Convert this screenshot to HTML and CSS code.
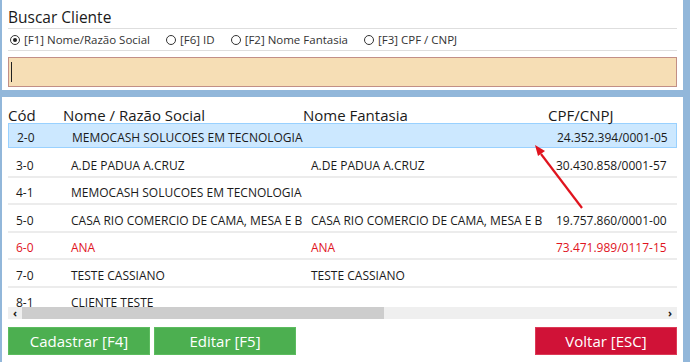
FILE: index.html
```html
<!DOCTYPE html>
<html>
<head>
    <title>Buscar Cliente</title>
    <meta charset="utf-8">
    <link rel="stylesheet" href="styles.css">
</head>
<body>
    <div class="window">
        <div class="search-panel">
            <div class="title">Buscar Cliente</div>
            <div class="options">
                <label class="option"><span class="radio checked"></span>[F1] Nome/Razão Social</label>
                <label class="option"><span class="radio"></span>[F6] ID</label>
                <label class="option"><span class="radio"></span>[F2] Nome Fantasia</label>
                <label class="option"><span class="radio"></span>[F3] CPF / CNPJ</label>
            </div>
            <div class="search-input"><span class="caret"></span></div>
        </div>

        <div class="results-panel">
            <div class="grid">
                <div class="row head">
                    <div class="cell">Cód</div>
                    <div class="cell">Nome / Razão Social</div>
                    <div class="cell">Nome Fantasia</div>
                    <div class="cell">CPF/CNPJ</div>
                </div>
                <div class="row selected">
                    <div class="cell">2-0</div>
                    <div class="cell">MEMOCASH SOLUCOES EM TECNOLOGIA</div>
                    <div class="cell"></div>
                    <div class="cell doc">24.352.394/0001-05</div>
                </div>
                <div class="row">
                    <div class="cell">3-0</div>
                    <div class="cell">A.DE PADUA A.CRUZ</div>
                    <div class="cell">A.DE PADUA A.CRUZ</div>
                    <div class="cell doc">30.430.858/0001-57</div>
                </div>
                <div class="row">
                    <div class="cell">4-1</div>
                    <div class="cell">MEMOCASH SOLUCOES EM TECNOLOGIA</div>
                    <div class="cell"></div>
                    <div class="cell doc"></div>
                </div>
                <div class="row">
                    <div class="cell">5-0</div>
                    <div class="cell">CASA RIO COMERCIO DE CAMA, MESA E B</div>
                    <div class="cell">CASA RIO COMERCIO DE CAMA, MESA E B</div>
                    <div class="cell doc">19.757.860/0001-00</div>
                </div>
                <div class="row inactive">
                    <div class="cell">6-0</div>
                    <div class="cell">ANA</div>
                    <div class="cell">ANA</div>
                    <div class="cell doc">73.471.989/0117-15</div>
                </div>
                <div class="row">
                    <div class="cell">7-0</div>
                    <div class="cell">TESTE CASSIANO</div>
                    <div class="cell">TESTE CASSIANO</div>
                    <div class="cell doc"></div>
                </div>
                <div class="row">
                    <div class="cell">8-1</div>
                    <div class="cell">CLIENTE TESTE</div>
                    <div class="cell"></div>
                    <div class="cell doc"></div>
                </div>
            </div>

            <div class="hscroll">
                <span class="arrow">&lsaquo;</span>
                <div class="track"><div class="thumb"></div></div>
                <span class="arrow">&rsaquo;</span>
            </div>

            <div class="actions">
                <button class="button green">Cadastrar [F4]</button>
                <button class="button green">Editar [F5]</button>
                <span class="spacer"></span>
                <button class="button red">Voltar [ESC]</button>
            </div>
        </div>

        <svg class="pointer" width="690" height="362" viewBox="0 0 690 362">
            <line x1="582" y1="208" x2="541" y2="154" stroke="#e0141e" stroke-width="2.2"/>
            <polygon points="535,145 545,151 538,156" fill="#e0141e"/>
        </svg>
    </div>
</body>
</html>
```

FILE: styles.css
```css
body {
    margin: 0;
    background-color: #92b7da;
    font-family: "Open Sans", "Noto Sans", Arial, sans-serif;
    color: #1a1a1a;
}
.window {
    width: 690px;
    height: 362px;
    padding: 0 7px 0 2px;
    box-sizing: border-box;
    position: relative;
    overflow: hidden;
}
.search-panel {
    background-color: white;
    height: 90px;
    padding: 0 6px;
    box-sizing: border-box;
}
.title {
    font-size: 15.5px;
    height: 29px;
    line-height: 30px;
    padding-top: 2px;
    border-bottom: 1px solid #dedede;
    box-sizing: border-box;
    overflow: hidden;
}
.options {
    display: flex;
    gap: 16px;
    height: 21px;
    align-items: center;
    font-size: 11.5px;
    color: #333;
    border-bottom: 1px solid #dedede;
    padding-left: 2px;
}
.option {
    display: flex;
    align-items: center;
    gap: 4px;
}
.radio {
    width: 8px;
    height: 8px;
    border: 1px solid #333;
    border-radius: 50%;
    position: relative;
}
.radio.checked::after {
    content: "";
    position: absolute;
    left: 2px;
    top: 2px;
    width: 4px;
    height: 4px;
    border-radius: 50%;
    background-color: #222;
}
.search-input {
    margin-top: 6px;
    height: 30px;
    width: 669px;
    background-color: #f6deb5;
    border: 1px solid #c28f86;
    box-sizing: border-box;
    padding: 4px 2px;
}
.caret {
    display: block;
    width: 1px;
    height: 20px;
    background-color: #222;
}
.results-panel {
    margin-top: 7px;
    background-color: white;
    height: 265px;
    padding: 0 6px;
    box-sizing: border-box;
}
.grid {
    height: 210px;
    overflow: hidden;
}
.row {
    display: grid;
    grid-template-columns: 55px 240px 245px 128px;
    height: 27.5px;
    align-items: center;
    font-size: 12px;
    border-bottom: 2px solid #ececec;
    box-sizing: border-box;
    padding-top: 5px;
}
.row .cell {
    white-space: nowrap;
    overflow: hidden;
    padding-left: 8px;
}
.row .cell.doc {
    text-align: right;
    padding-right: 14px;
}
.row.head {
    height: 26px;
    font-size: 15px;
    line-height: 16px;
    border-bottom: none;
    align-items: end;
    padding-top: 0;
}
.row.head .cell {
    padding-left: 0;
    overflow: visible;
}
.row.head .cell.doc {
    text-align: left;
    padding-left: 5px;
}
.row.selected {
    background-color: #cce8ff;
    border: 1px solid #99d1ff;
    height: 25px;
    margin-bottom: 2px;
    padding-top: 4px;
}
.row.inactive {
    color: #e0141e;
}
.hscroll {
    display: flex;
    align-items: center;
    height: 12px;
    background-color: #efefef;
    width: 669px;
    font-size: 11px;
    font-weight: bold;
}
.arrow {
    width: 14px;
    text-align: center;
    line-height: 12px;
}
.track {
    flex: 1;
    height: 12px;
}
.thumb {
    width: 362px;
    height: 12px;
    background-color: #cdcdcd;
}
.actions {
    display: flex;
    gap: 4px;
    margin-top: 8px;
    width: 669px;
}
.spacer {
    flex: 1;
}
.button {
    width: 142px;
    height: 28px;
    border: none;
    color: white;
    font-family: inherit;
    font-size: 15px;
    padding: 0;
}
.button.green {
    background-color: #4caf50;
    border: 1px solid #5cbc5f;
}
.button.red {
    background-color: #d01237;
    border: 1px solid #dc3a56;
}
.pointer {
    position: absolute;
    left: 0;
    top: 0;
    pointer-events: none;
}
```
